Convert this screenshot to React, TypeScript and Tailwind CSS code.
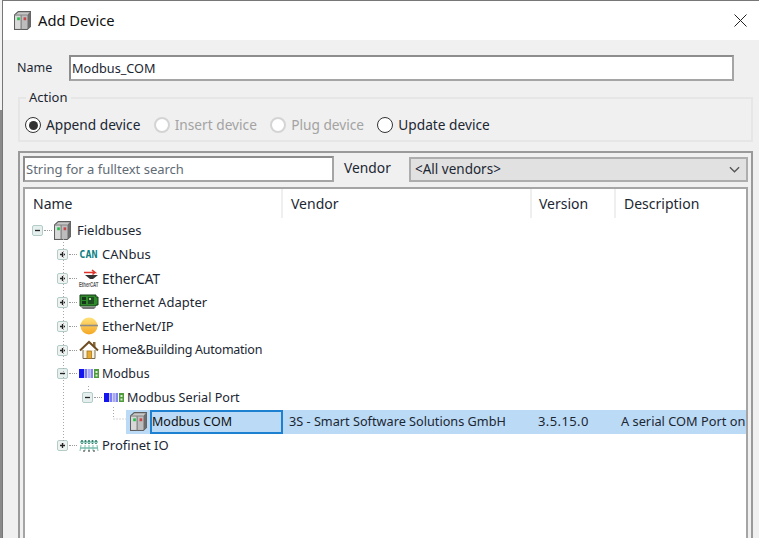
const font = { fontFamily: '"Noto Sans", "Open Sans", sans-serif' };

function DeviceIcon({ className = "" }: { className?: string }) {
  return (
    <svg viewBox="1 1 16 16.5" preserveAspectRatio="none" className={`w-[17px] h-[19px] ${className}`}>
      <path d="M1.5 4.5 L5 1.5 H16.5 V14.5 L13.5 17 H1.5 Z" fill="#c9c9c9" stroke="#5f5f5f" />
      <path d="M13.5 4.5 L16.5 1.5 V14.5 L13.5 17 Z" fill="#6d6d6d" />
      <rect x="2" y="5" width="5.5" height="11.5" fill="#d9d9d9" />
      <rect x="8" y="5" width="5.5" height="11.5" fill="#bdbdbd" />
      <path d="M7.7 4.5 V17" stroke="#777" />
      <path d="M1.5 4.5 H13.5" stroke="#8a8a8a" />
      <rect x="4" y="6.5" width="2.5" height="2.5" fill="#22c24a" />
      <rect x="10" y="6.5" width="2.5" height="2.5" fill="#c8464a" />
    </svg>
  );
}

function Expander({ open }: { open: boolean }) {
  return (
    <svg viewBox="0 0 11 11" className="w-[11px] h-[11px] shrink-0">
      <rect x="0.5" y="0.5" width="10" height="10" rx="1.5" fill={open ? "#e4efee" : "#eef3f1"} stroke="#b4cbc8" />
      <path d={open ? "M3 5.5 H8" : "M3 5.5 H8 M5.5 3 V8"} stroke="#222" strokeWidth="1.3" />
    </svg>
  );
}

function CanIcon() {
  return (
    <span
      className="w-[20px] text-center text-[10px] font-bold leading-none tracking-[0.2px] text-[#0f7f86]"
      style={{ fontFamily: '"DejaVu Sans Mono", monospace' }}
    >
      CAN
    </span>
  );
}

function EtherCatIcon() {
  return (
    <svg viewBox="0 0 20 20" className="w-[20px] h-[20px] overflow-visible">
      <path d="M5 3.5 H16 L13 1 M16 3.5 L13.5 5.5" stroke="#e0332a" strokeWidth="1.6" fill="none" />
      <path d="M6 6 H19 L14 10 H11 Z" fill="#333" />
      <text
        x="0"
        y="11.5"
        transform="scale(1,1.6)"
        fontSize="4.5"
        fontWeight="700"
        fontFamily="Liberation Sans, sans-serif"
        fill="#555"
        textLength="19.5"
        lengthAdjust="spacingAndGlyphs"
      >
        EtherCAT
      </text>
    </svg>
  );
}

function AdapterIcon() {
  return (
    <svg viewBox="0 0 20 18" className="w-[20px] h-[18px]">
      <path d="M1 2 H17 V4 H19 V12 H17 V13 H1 Z" fill="#2f8a2a" stroke="#163d16" />
      <rect x="3" y="4" width="4" height="3" fill="#16351a" />
      <rect x="3" y="8" width="4" height="3" fill="#16351a" />
      <rect x="9" y="4" width="6" height="7" fill="#1d4d20" />
      <rect x="10" y="5" width="2" height="2" fill="#a9d98f" />
      <path d="M2 14 H17 L15 16 H4 Z" fill="#777" />
    </svg>
  );
}

function EtherNetIpIcon() {
  return (
    <svg viewBox="0 0 20 18" className="w-[20px] h-[18px]">
      <defs>
        <linearGradient id="ip" x1="0" y1="0" x2="0" y2="1">
          <stop offset="0" stopColor="#ffe27a" />
          <stop offset="1" stopColor="#f5a623" />
        </linearGradient>
      </defs>
      <circle cx="10" cy="9" r="8.5" fill="url(#ip)" />
      <path d="M1 8.5 H19" stroke="#8c8c8c" strokeWidth="1.6" />
    </svg>
  );
}

function HomeIcon() {
  return (
    <svg viewBox="0 0 20 20" className="w-[20px] h-[20px]">
      <rect x="14" y="2" width="2.5" height="5" fill="#8a6a3a" />
      <path d="M4 10 V18.5 H16 V10" fill="#f7f1e0" stroke="#7a6a50" />
      <path d="M1 10.5 L10 2 L19 10.5" fill="none" stroke="#6f4e24" strokeWidth="2" />
      <rect x="8" y="11" width="4.5" height="7.5" fill="#e8a92c" stroke="#9a6d1e" strokeWidth="0.7" />
    </svg>
  );
}

function ModbusIcon() {
  return (
    <svg viewBox="0 0 20 11" className="w-[20px] h-[11px]">
      <rect x="0" y="1" width="5" height="9" fill="#1414f0" />
      <rect x="5.5" y="1" width="2.5" height="9" fill="#7c7cf2" />
      <rect x="8.5" y="1" width="2.5" height="9" fill="#a9a9f5" />
      <rect x="11.5" y="1" width="2.5" height="9" fill="#8484ee" />
      <rect x="15" y="1" width="5" height="9" fill="#4f9a3a" />
      <rect x="16.5" y="3" width="2" height="2" fill="#d7ecd0" />
      <rect x="16.5" y="6.5" width="2" height="2" fill="#d7ecd0" />
    </svg>
  );
}

function ProfinetIcon() {
  return (
    <svg viewBox="0 0 20 14" className="w-[20px] h-[14px]">
      <path d="M1 3 H19 M1 9 H19" stroke="#3c9c86" strokeWidth="1" />
      <path d="M3 1 V5 M6.5 1 V5 M10 1 V5 M13.5 1 V5 M17 1 V5" stroke="#2c7f6c" strokeWidth="1.6" strokeDasharray="2 1" />
      <path d="M2 6 L1 12 M6 6 V12 M10 6 V12 M14 6 V12 M18 6 L19 12" stroke="#7dbfae" />
      <path d="M4 12 H6 M9 12 H11 M14 12 H16" stroke="#333" />
    </svg>
  );
}

function Radio({ label, checked, disabled }: { label: string; checked?: boolean; disabled?: boolean }) {
  return (
    <label className={`flex items-center gap-[5px] text-[13.7px] ${disabled ? "text-[#a3a3a3]" : "text-[#1c2733]"}`}>
      <span
        className={`w-[16px] h-[16px] rounded-full bg-white flex items-center justify-center ${
          disabled ? "border-2 border-[#d4d4d4]" : "border-[1.5px] border-[#333]"
        }`}
      >
        {checked && <span className="w-[9px] h-[9px] rounded-full bg-[#333]" />}
      </span>
      {label}
    </label>
  );
}

type Row = { level: number; label: string; open?: boolean; icon: React.ReactNode; text?: string };

const rows: Row[] = [
  { level: 0, label: "Fieldbuses", open: true, icon: <DeviceIcon className="mr-[2px]" /> },
  { level: 1, label: "CANbus", open: false, icon: <CanIcon /> },
  { level: 1, label: "EtherCAT", open: false, icon: <EtherCatIcon />, text: "text-[13.6px]" },
  { level: 1, label: "Ethernet Adapter", open: false, icon: <AdapterIcon /> },
  { level: 1, label: "EtherNet/IP", open: false, icon: <EtherNetIpIcon /> },
  {
    level: 1,
    label: "Home&Building Automation",
    open: false,
    icon: <HomeIcon />,
    text: "text-[12.5px] tracking-[-0.25px]",
  },
  { level: 1, label: "Modbus", open: true, icon: <ModbusIcon />, text: "text-[12.4px]" },
  { level: 2, label: "Modbus Serial Port", open: true, icon: <ModbusIcon />, text: "text-[12.6px]" },
];

function TreeRow({ row }: { row: Row }) {
  const indent = ["pl-[7px]", "pl-[32px]", "pl-[57px]"][row.level];
  return (
    <div className={`h-[23.85px] flex items-center ${indent}`}>
      <Expander open={!!row.open} />
      <span className="w-[8px] mx-[1px] border-t border-dotted border-[#9a9a9a]" />
      <span className="w-[21px] flex items-center justify-center shrink-0">{row.icon}</span>
      <span className={`ml-[3px] whitespace-nowrap ${row.text ?? ""}`}>{row.label}</span>
    </div>
  );
}

export default function App() {
  return (
    <div
      className="w-[759px] h-[538px] overflow-hidden flex bg-white text-[13px] leading-none text-[#1c2733]"
      style={font}
    >
      <div className="w-[2px] shrink-0 flex flex-col">
        <div className="h-[110px] bg-[#f2f2f2]" />
        <div className="flex-1 bg-[#8a8a8a]" />
      </div>
      <div className="flex-1 min-w-0 border-l border-t border-[#777] flex flex-col">
        {/* Title bar */}
        <div className="h-[39px] shrink-0 bg-white flex items-center pl-[11px] pr-[6px]">
          <DeviceIcon className="mt-[-1px]" />
          <span className="ml-[7px] text-[14.7px] text-[#111]">Add Device</span>
          <svg viewBox="0 0 13 13" className="w-[13px] h-[13px] ml-auto mr-[6px]">
            <path d="M0.5 0.5 L12.5 12.5 M12.5 0.5 L0.5 12.5" stroke="#222" strokeWidth="1" />
          </svg>
        </div>

        {/* Body */}
        <div className="flex-1 min-h-0 bg-[#f0f0f0] pl-[14px] pr-[6px] pt-[15px] flex flex-col">
          <div className="flex items-center h-[26px] pr-[19px]">
            <span className="w-[52px] text-[12.5px]">Name</span>
            <div className="flex-1 h-[26px] bg-white border-2 border-[#8d8d8d] border-b-[#a5a5a5] border-r-[#a5a5a5] pl-[1px] flex items-center text-[12.7px]">
              Modbus_COM
            </div>
          </div>

          <div className="relative mt-[16px] h-[45px] ml-[1px] border-2 border-[#e6e6e6] flex items-center gap-[13.3px] pl-[5px] pt-[11px]">
            <span className="absolute left-[6px] top-[-10px] bg-[#f0f0f0] px-[3px] leading-[16px]">Action</span>
            <Radio label="Append device" checked />
            <Radio label="Insert device" disabled />
            <Radio label="Plug device" disabled />
            <Radio label="Update device" />
          </div>

          <div className="mt-[9px] ml-[1px] flex-1 min-h-0 border-2 border-b-0 border-[#9a9a9a] px-[3px] pt-[3px] flex flex-col">
            <div className="flex items-center h-[26px] shrink-0">
              <div className="w-[311px] h-[26px] bg-white border-2 border-[#8d8d8d] border-r-[#a5a5a5] border-b-[#a5a5a5] pl-[1px] flex items-center text-[#5f6b75]">
                String for a fulltext search
              </div>
              <span className="ml-[10px] w-[65px] text-[13.8px] mt-[-3px]">Vendor</span>
              <div className="flex-1 h-[25px] bg-[#e1e1e1] border-2 border-[#adadad] pl-[4px] pr-[6px] flex items-center text-[13.5px]">
                <span className="mt-[2px]">&lt;All vendors&gt;</span>
                <svg viewBox="0 0 12 7" className="w-[11px] h-[7px] ml-auto">
                  <path d="M1 1 L6 6 L11 1" fill="none" stroke="#555" strokeWidth="1.4" />
                </svg>
              </div>
            </div>

            <div className="mt-[5px] flex-1 min-h-0 bg-white border-2 border-b-0 border-[#a5a5a5] flex flex-col overflow-hidden">
              <div className="h-[29px] shrink-0 grid grid-cols-[258px_249px_84px_1fr] items-center text-[14px]">
                <div className="pl-[8px] h-full flex items-center border-r-2 border-[#efefef]">Name</div>
                <div className="pl-[8px] h-full flex items-center border-r-2 border-[#efefef]">Vendor</div>
                <div className="pl-[7px] h-full flex items-center border-r-2 border-[#efefef]">Version</div>
                <div className="pl-[8px] h-full flex items-center">Description</div>
              </div>

              <div className="relative pt-[1px]">
                {/* Tree guide lines */}
                <svg className="absolute left-0 top-0 w-[140px] h-[250px] pointer-events-none" viewBox="0 0 140 250">
                  <path
                    d="M38.5 21 V226 M63.5 168 V174 M88.5 189 V201 H101"
                    fill="none"
                    stroke="#a8a8a8"
                    strokeDasharray="1 2"
                  />
                </svg>
                {rows.map((r) => (
                  <TreeRow key={r.label} row={r} />
                ))}
                <div className="h-[24px] grid grid-cols-[258px_249px_84px_1fr] items-center">
                  <div className="h-full flex items-center pl-[101px]">
                    <span className="h-full w-[24px] bg-[#bbdaf5] flex items-center justify-center shrink-0">
                      <DeviceIcon />
                    </span>
                    <span className="h-full flex-1 bg-[#bbdaf5] border-2 border-[#1e80d0] flex items-center text-[12.5px] text-[#111]">
                      Modbus COM
                    </span>
                  </div>
                  <div className="h-full bg-[#bbdaf5] flex items-center pl-[6px] text-[12.7px] whitespace-nowrap overflow-hidden">
                    3S - Smart Software Solutions GmbH
                  </div>
                  <div className="h-full bg-[#bbdaf5] flex items-center pl-[6px] tracking-[0.4px]">3.5.15.0</div>
                  <div className="h-full bg-[#bbdaf5] flex items-center pl-[5px] text-[12.8px] whitespace-nowrap overflow-hidden">
                    A serial COM Port on
                  </div>
                </div>
                <TreeRow row={{ level: 1, label: "Profinet IO", open: false, icon: <ProfinetIcon /> }} />
              </div>
            </div>
          </div>
        </div>
      </div>
    </div>
  );
}
